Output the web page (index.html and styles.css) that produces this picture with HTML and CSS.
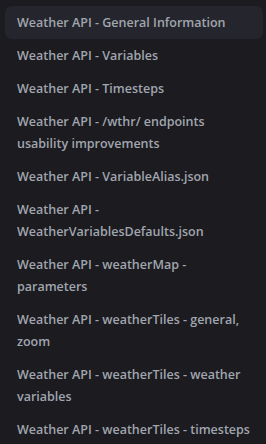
FILE: index.html
```html
<!DOCTYPE html>
<html>
<head>
<meta charset="utf-8">
<link rel="stylesheet" href="styles.css">
</head>
<body>
<nav class="menu">
  <a class="item active">Weather API - General Information</a>
  <a class="item">Weather API - Variables</a>
  <a class="item">Weather API - Timesteps</a>
  <a class="item">Weather API - /wthr/ endpoints usability improvements</a>
  <a class="item">Weather API - VariableAlias.json</a>
  <a class="item">Weather API - WeatherVariablesDefaults.json</a>
  <a class="item">Weather API - weatherMap - parameters</a>
  <a class="item">Weather API - weatherTiles - general, zoom</a>
  <a class="item">Weather API - weatherTiles - weather variables</a>
  <a class="item">Weather API - weatherTiles - timesteps</a>
</nav>
</body>
</html>
```
FILE: styles.css
```css
html, body {
  margin: 0;
  padding: 0;
  background: #1b1b20;
}
body {
  width: 266px;
  height: 444px;
  overflow: hidden;
}
.menu {
  display: flex;
  flex-direction: column;
  gap: 1px;
  padding: 6px 3px 0 5px;
}
.item {
  display: block;
  padding: 5px 12px;
  line-height: 22px;
  font-family: "Open Sans", sans-serif;
  font-size: 12.5px;
  font-weight: 600;
  color: #a1a5ae;
  border-radius: 7px;
}
.item:first-child {
  padding-top: 6px;
  padding-bottom: 5px;
}
.item.active {
  background: #25252d;
}
```
